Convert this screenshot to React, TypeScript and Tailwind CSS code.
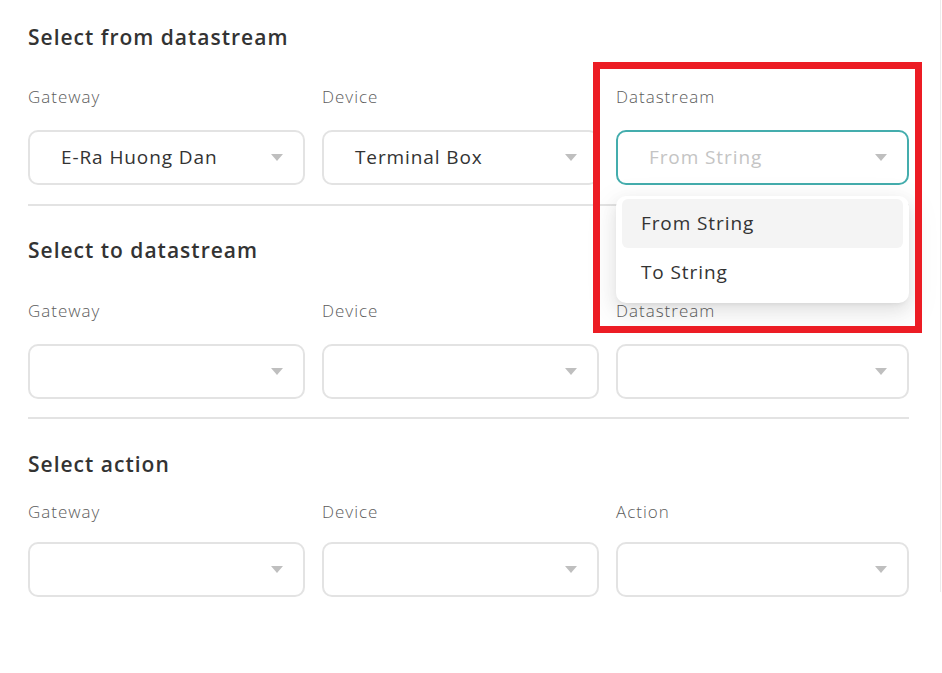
const font = { fontFamily: '"Open Sans", "Noto Sans", sans-serif' };

const Caret = () => (
  <svg width="12" height="7" viewBox="0 0 12 7" className="shrink-0">
    <path d="M0 0 L12 0 L6 7 Z" fill="#bfbfbf" />
  </svg>
);

type SelectProps = {
  value?: string;
  placeholder?: boolean;
  focused?: boolean;
  width: string;
};

const Select = ({ value, placeholder, focused, width }: SelectProps) => (
  <div
    className={`${width} h-[55px] rounded-[10px] border-2 bg-white flex items-center justify-between pl-[31px] pr-[20px] ${
      focused ? "border-[#44adad]" : "border-[#e3e3e3]"
    }`}
  >
    <span className={`text-[19px] tracking-[0.9px] ${placeholder ? "text-[#c4c4c4]" : "text-[#333]"}`}>{value}</span>
    <Caret />
  </div>
);

const Field = ({
  label,
  children,
  width,
  gap,
}: {
  label: string;
  children: React.ReactNode;
  width: string;
  gap: string;
}) => (
  <div className={`${width} flex flex-col ${gap}`}>
    <p className="text-[17px] leading-[24px] tracking-[1px] font-light text-[#5c5c5c]">{label}</p>
    {children}
  </div>
);

export default function App() {
  return (
    <div className="w-[942px] h-[673px] bg-white relative" style={font}>
      <div className="w-[941px] h-[592px] border-r border-[#ececec] pl-[28px] pt-[23px]">
        {/* ======================= Select from Start here ===================== */}
        <h2 className="text-[21px] leading-[28px] tracking-[1px] font-semibold text-[#333]">Select from datastream</h2>
        <div className="flex gap-[17px] mt-[34px]">
          <Field label="Gateway" width="w-[277px]" gap="gap-[21px]">
            <Select value="E-Ra Huong Dan" width="w-[277px]" />
          </Field>
          <Field label="Device" width="w-[277px]" gap="gap-[21px]">
            <Select value="Terminal Box" width="w-[277px]" />
          </Field>
          <Field label="Datastream" width="w-[293px]" gap="gap-[21px]">
            <div className="relative">
              <Select value="From String" placeholder focused width="w-[293px]" />
              <div className="absolute left-0 top-[66px] w-[293px] z-10 bg-white rounded-[10px] px-[6px] pt-[3px] pb-[6px] shadow-[0_3px_6px_-4px_rgba(0,0,0,0.12),0_6px_16px_0_rgba(0,0,0,0.08),0_9px_28px_8px_rgba(0,0,0,0.05)]">
                <div className="h-[49px] rounded-[6px] bg-[#f4f4f4] flex items-center pl-[19px] text-[19px] tracking-[0.9px] text-[#333]">
                  From String
                </div>
                <div className="h-[49px] flex items-center pl-[19px] text-[19px] tracking-[0.9px] text-[#333]">To String</div>
              </div>
            </div>
          </Field>
        </div>
        <div className="w-[881px] border-t-2 border-[#e3e3e3] mt-[19px]" />
        {/* ======================= Select to Start here ===================== */}
        <h2 className="text-[21px] leading-[28px] tracking-[1px] font-semibold text-[#333] mt-[30px]">Select to datastream</h2>
        <div className="flex gap-[17px] mt-[35px]">
          <Field label="Gateway" width="w-[277px]" gap="gap-[21px]">
            <Select width="w-[277px]" />
          </Field>
          <Field label="Device" width="w-[277px]" gap="gap-[21px]">
            <Select width="w-[277px]" />
          </Field>
          <Field label="Datastream" width="w-[293px]" gap="gap-[21px]">
            <Select width="w-[293px]" />
          </Field>
        </div>
        <div className="w-[881px] border-t-2 border-[#e3e3e3] mt-[18px]" />
        {/* ======================= Select action Start here ===================== */}
        <h2 className="text-[21px] leading-[28px] tracking-[1px] font-semibold text-[#333] mt-[31px]">Select action</h2>
        <div className="flex gap-[17px] mt-[22px]">
          <Field label="Gateway" width="w-[277px]" gap="gap-[18px]">
            <Select width="w-[277px]" />
          </Field>
          <Field label="Device" width="w-[277px]" gap="gap-[18px]">
            <Select width="w-[277px]" />
          </Field>
          <Field label="Action" width="w-[293px]" gap="gap-[18px]">
            <Select width="w-[293px]" />
          </Field>
        </div>
      </div>
      {/* annotation frame */}
      <div className="absolute left-[593px] top-[62px] w-[329px] h-[271px] border-[7px] border-[#ec1c24] z-20 pointer-events-none" />
    </div>
  );
}
